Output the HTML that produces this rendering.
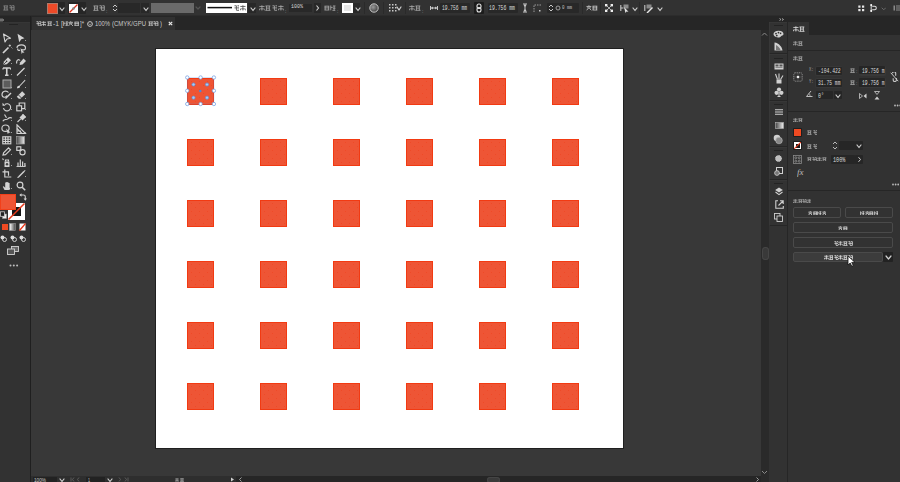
<!DOCTYPE html>
<html><head><meta charset="utf-8"><style>
*{margin:0;padding:0;box-sizing:border-box}
html,body{width:900px;height:482px;overflow:hidden;background:#323232;font-family:"Liberation Sans",sans-serif;color:#c8c8c8;position:relative}
.a{position:absolute;display:block}
.t{white-space:nowrap}
.sq{position:absolute;width:27px;height:27px;background-color:#ee5535;background-image:radial-gradient(circle at 2.5px 2.5px,#ef4a28 0.6px,transparent 1px),radial-gradient(circle at 6.5px 6.5px,#ef4a28 0.6px,transparent 1px);background-size:8px 8px;background-position:2px 1px;box-shadow:inset 0 0 0 1px #f23a12}
</style></head><body>
<div class="a" style="left:0px;top:0px;width:900px;height:16px;background:#323232;"></div>
<div class="a" style="left:0px;top:15px;width:900px;height:1px;background:#2c2c2c;"></div>
<div class="a" style="left:0px;top:16px;width:30px;height:6px;background:#262626;"></div>
<div class="a" style="left:0px;top:22px;width:30px;height:460px;background:#323232;"></div>
<div class="a" style="left:30px;top:16px;width:1px;height:466px;background:#1f1f1f;"></div>
<div class="a" style="left:31px;top:16px;width:738px;height:14px;background:#262626;"></div>
<div class="a" style="left:32px;top:16.5px;width:143px;height:13px;background:#313131;"></div>
<div class="a" style="left:31px;top:30px;width:730px;height:446px;background:#383838;"></div>
<div class="a" style="left:155px;top:48px;width:469px;height:401px;background:#1f1f1f;"></div>
<div class="a" style="left:156px;top:49px;width:467px;height:399px;background:#ffffff;"></div>
<div class="sq" style="left:187px;top:78px"></div><div class="sq" style="left:260px;top:78px"></div><div class="sq" style="left:333px;top:78px"></div><div class="sq" style="left:406px;top:78px"></div><div class="sq" style="left:479px;top:78px"></div><div class="sq" style="left:552px;top:78px"></div><div class="sq" style="left:187px;top:139px"></div><div class="sq" style="left:260px;top:139px"></div><div class="sq" style="left:333px;top:139px"></div><div class="sq" style="left:406px;top:139px"></div><div class="sq" style="left:479px;top:139px"></div><div class="sq" style="left:552px;top:139px"></div><div class="sq" style="left:187px;top:200px"></div><div class="sq" style="left:260px;top:200px"></div><div class="sq" style="left:333px;top:200px"></div><div class="sq" style="left:406px;top:200px"></div><div class="sq" style="left:479px;top:200px"></div><div class="sq" style="left:552px;top:200px"></div><div class="sq" style="left:187px;top:261px"></div><div class="sq" style="left:260px;top:261px"></div><div class="sq" style="left:333px;top:261px"></div><div class="sq" style="left:406px;top:261px"></div><div class="sq" style="left:479px;top:261px"></div><div class="sq" style="left:552px;top:261px"></div><div class="sq" style="left:187px;top:322px"></div><div class="sq" style="left:260px;top:322px"></div><div class="sq" style="left:333px;top:322px"></div><div class="sq" style="left:406px;top:322px"></div><div class="sq" style="left:479px;top:322px"></div><div class="sq" style="left:552px;top:322px"></div><div class="sq" style="left:187px;top:383px"></div><div class="sq" style="left:260px;top:383px"></div><div class="sq" style="left:333px;top:383px"></div><div class="sq" style="left:406px;top:383px"></div><div class="sq" style="left:479px;top:383px"></div><div class="sq" style="left:552px;top:383px"></div>
<div class="a" style="left:31px;top:476px;width:729px;height:6px;background:#262626;"></div>
<div class="a" style="left:760px;top:16px;width:140px;height:6px;background:#262626;"></div>
<div class="a" style="left:761px;top:30px;width:8px;height:446px;background:#2a2a2a;"></div>
<div class="a" style="left:761px;top:476px;width:8px;height:6px;background:#2a2a2a;"></div>
<div class="a" style="left:769px;top:22px;width:18px;height:460px;background:#323232;"></div>
<div class="a" style="left:787px;top:22px;width:1px;height:460px;background:#262626;"></div>
<div class="a" style="left:788px;top:22px;width:112px;height:460px;background:#323232;"></div>
<svg class="a" style="left:3.0px;top:5px;opacity:1.0" width="5.5" height="5.5" viewBox="0 0 6 6"><path d="M0.5 1h5M1.5 1v4.5M4.5 1v4.5M1.5 3.2h3M0.3 5.5h5.4" fill="none" stroke="#8a8a8a" stroke-width="0.93"/></svg><svg class="a" style="left:9.0px;top:5px;opacity:1.0" width="5.5" height="5.5" viewBox="0 0 6 6"><path d="M0.5 0.8h2v4.5M3.5 0.8h2v4.7M0.5 3h5M2.5 5.5h3" fill="none" stroke="#8a8a8a" stroke-width="0.93"/></svg>
<div class="a" style="left:47px;top:2px;width:18px;height:12px;background:#262626;border-radius:1px"></div>
<div class="a" style="left:48px;top:4px;width:9px;height:9px;background:#ee4a28;box-shadow:0 0 0 1px #b07a6a"></div>
<svg class="a" style="left:58.5px;top:6.5px;" width="6" height="5.5" viewBox="0 0 6 5.5"><polyline points="1,1 3.0,3.5 5,1" fill="none" stroke="#d0d0d0" stroke-width="1.2" stroke-linejoin="round" stroke-linecap="round"/></svg>
<div class="a" style="left:68px;top:2px;width:18px;height:12px;background:#262626;border-radius:1px"></div>
<div class="a" style="left:69px;top:4px;width:9px;height:9px;background:#ffffff;"></div>
<svg class="a" style="left:69px;top:4px;" width="9" height="9" viewBox="0 0 9 9"><line x1="0.5" y1="8.5" x2="8.5" y2="0.5" stroke="#e0321c" stroke-width="1.2"/><circle cx="4.5" cy="4.5" r="1.3" fill="#888"/></svg>
<svg class="a" style="left:80.5px;top:6.5px;" width="6" height="5.5" viewBox="0 0 6 5.5"><polyline points="1,1 3.0,3.5 5,1" fill="none" stroke="#d0d0d0" stroke-width="1.2" stroke-linejoin="round" stroke-linecap="round"/></svg>
<svg class="a" style="left:93.0px;top:5px;opacity:1.0" width="5.8" height="5.8" viewBox="0 0 6 6"><path d="M0.5 1h5M1.5 1v4.5M4.5 1v4.5M1.5 3.2h3M0.3 5.5h5.4" fill="none" stroke="#a8a8a8" stroke-width="0.88"/></svg><svg class="a" style="left:99.3px;top:5px;opacity:1.0" width="5.8" height="5.8" viewBox="0 0 6 6"><path d="M0.5 0.8h2v4.5M3.5 0.8h2v4.7M0.5 3h5M2.5 5.5h3" fill="none" stroke="#a8a8a8" stroke-width="0.88"/></svg>
<div class="a t" style="left:106px;top:8.85px;font-size:5px;line-height:5px;color:#a8a8a8;">:</div>
<svg class="a" style="left:112px;top:3px;" width="6" height="10" viewBox="0 0 6 10"><polyline points="1,4 3,2 5,4" fill="none" stroke="#c8c8c8" stroke-width="1"/><polyline points="1,6 3,8 5,6" fill="none" stroke="#c8c8c8" stroke-width="1"/></svg>
<div class="a" style="left:118px;top:3px;width:22px;height:10px;background:#282828;"></div>
<div class="a" style="left:141px;top:3px;width:8px;height:10px;background:#282828;"></div>
<svg class="a" style="left:143px;top:6.5px;" width="6" height="5.5" viewBox="0 0 6 5.5"><polyline points="1,1 3.0,3.5 5,1" fill="none" stroke="#d0d0d0" stroke-width="1.2" stroke-linejoin="round" stroke-linecap="round"/></svg>
<div class="a" style="left:151px;top:3px;width:43px;height:10px;background:#6a6a6a;"></div>
<svg class="a" style="left:195px;top:6px;" width="6" height="5" viewBox="0 0 6 5"><polyline points="1,1 3.0,3 5,1" fill="none" stroke="#555555" stroke-width="1.2" stroke-linejoin="round" stroke-linecap="round"/></svg>
<div class="a" style="left:206px;top:3px;width:41px;height:10px;background:#ffffff;"></div>
<svg class="a" style="left:206px;top:6px;" width="27" height="3" viewBox="0 0 27 3"><line x1="1.5" y1="1.6" x2="26" y2="1.6" stroke="#111" stroke-width="1.5"/></svg>
<svg class="a" style="left:233.5px;top:5px;opacity:1.0" width="5.8" height="5.8" viewBox="0 0 6 6"><path d="M0.5 0.8h2v4.5M3.5 0.8h2v4.7M0.5 3h5M2.5 5.5h3" fill="none" stroke="#505050" stroke-width="0.88"/></svg><svg class="a" style="left:239.8px;top:5px;opacity:1.0" width="5.8" height="5.8" viewBox="0 0 6 6"><path d="M0.3 1.5h5.4M3 0.3v5.4M1 3.5l-0.7 2M5 3.5l0.7 2M1.5 4h3" fill="none" stroke="#505050" stroke-width="0.88"/></svg>
<div class="a" style="left:248px;top:3px;width:8px;height:10px;background:#282828;"></div>
<svg class="a" style="left:250px;top:6.5px;" width="6" height="5.5" viewBox="0 0 6 5.5"><polyline points="1,1 3.0,3.5 5,1" fill="none" stroke="#d0d0d0" stroke-width="1.2" stroke-linejoin="round" stroke-linecap="round"/></svg>
<svg class="a" style="left:259.0px;top:5px;opacity:1.0" width="5.8" height="5.8" viewBox="0 0 6 6"><path d="M0.3 1.5h5.4M3 0.3v5.4M1 3.5l-0.7 2M5 3.5l0.7 2M1.5 4h3" fill="none" stroke="#a8a8a8" stroke-width="0.88"/></svg><svg class="a" style="left:265.3px;top:5px;opacity:1.0" width="5.8" height="5.8" viewBox="0 0 6 6"><path d="M0.5 1h5M1.5 1v4.5M4.5 1v4.5M1.5 3.2h3M0.3 5.5h5.4" fill="none" stroke="#a8a8a8" stroke-width="0.88"/></svg><svg class="a" style="left:271.6px;top:5px;opacity:1.0" width="5.8" height="5.8" viewBox="0 0 6 6"><path d="M0.5 0.8h2v4.5M3.5 0.8h2v4.7M0.5 3h5M2.5 5.5h3" fill="none" stroke="#a8a8a8" stroke-width="0.88"/></svg><svg class="a" style="left:277.9px;top:5px;opacity:1.0" width="5.8" height="5.8" viewBox="0 0 6 6"><path d="M0.3 1.5h5.4M3 0.3v5.4M1 3.5l-0.7 2M5 3.5l0.7 2M1.5 4h3" fill="none" stroke="#a8a8a8" stroke-width="0.88"/></svg>
<div class="a t" style="left:285px;top:8.85px;font-size:5px;line-height:5px;color:#a8a8a8;">:</div>
<div class="a" style="left:289px;top:4px;width:23px;height:8px;background:#282828;"></div>
<div class="a t" style="left:290.5px;top:4.02px;font-size:6px;line-height:6px;color:#dadada;transform:scaleX(0.833);transform-origin:0 0;font-family:'Liberation Mono',monospace;">100%</div>
<div class="a" style="left:314px;top:3px;width:7px;height:10px;background:#282828;"></div>
<svg class="a" style="left:315px;top:4px;" width="5" height="8" viewBox="0 0 5 8"><polyline points="1.5,1.5 3.5,4 1.5,6.5" fill="none" stroke="#d0d0d0" stroke-width="1.1"/></svg>
<svg class="a" style="left:324.0px;top:5px;opacity:1.0" width="5.8" height="5.8" viewBox="0 0 6 6"><path d="M0.5 1.2h5M0.5 3h5M0.5 5.2h5M1.2 1.2v4M4.8 1.2v4" fill="none" stroke="#a8a8a8" stroke-width="0.88"/></svg><svg class="a" style="left:330.3px;top:5px;opacity:1.0" width="5.8" height="5.8" viewBox="0 0 6 6"><path d="M0.8 0.5v5M0.8 2.5h2M3 1h2.7M4.3 1v4.5M3 3.3h2.7M2.5 5.5h3" fill="none" stroke="#a8a8a8" stroke-width="0.88"/></svg>
<div class="a t" style="left:337px;top:8.85px;font-size:5px;line-height:5px;color:#a8a8a8;">:</div>
<div class="a" style="left:342px;top:3px;width:11px;height:10px;background:#f2f2f2;box-shadow:inset 0 0 0 1px #fff;background:#e6e6e6;border:1px solid #fff"></div>
<div class="a" style="left:353px;top:3px;width:7px;height:10px;background:#282828;"></div>
<svg class="a" style="left:354.5px;top:6.5px;" width="6" height="5.5" viewBox="0 0 6 5.5"><polyline points="1,1 3.0,3.5 5,1" fill="none" stroke="#d0d0d0" stroke-width="1.2" stroke-linejoin="round" stroke-linecap="round"/></svg>
<div class="a" style="left:364px;top:2px;width:1px;height:12px;background:#2a2a2a;"></div>
<svg class="a" style="left:368.5px;top:3px;" width="10" height="10" viewBox="0 0 10 10"><defs><radialGradient id="gb" cx="40%" cy="40%" r="65%"><stop offset="0" stop-color="#9a9a9a"/><stop offset="1" stop-color="#3a3a3a"/></radialGradient></defs><circle cx="5" cy="5" r="4.2" fill="url(#gb)" stroke="#d8d8d8" stroke-width="0.9"/></svg>
<div class="a" style="left:383px;top:2px;width:1px;height:12px;background:#2a2a2a;"></div>
<svg class="a" style="left:388px;top:3px;" width="9" height="10" viewBox="0 0 9 10"><rect x="1" y="1" width="1.5" height="1.5" fill="#c8c8c8"/><rect x="1" y="4" width="1.5" height="1.5" fill="#c8c8c8"/><rect x="1" y="7" width="1.5" height="1.5" fill="#c8c8c8"/><rect x="4" y="1" width="1.5" height="1.5" fill="#c8c8c8"/><rect x="4" y="4" width="1.5" height="1.5" fill="#c8c8c8"/><rect x="4" y="7" width="1.5" height="1.5" fill="#c8c8c8"/><rect x="7" y="1" width="1.5" height="1.5" fill="#c8c8c8"/><rect x="7" y="4" width="1.5" height="1.5" fill="#c8c8c8"/><rect x="7" y="7" width="1.5" height="1.5" fill="#c8c8c8"/></svg>
<svg class="a" style="left:396px;top:6px;" width="6" height="6" viewBox="0 0 6 6"><polyline points="1,1 3.0,4 5,1" fill="none" stroke="#d0d0d0" stroke-width="1.2" stroke-linejoin="round" stroke-linecap="round"/></svg>
<div class="a" style="left:405px;top:2px;width:1px;height:12px;background:#2a2a2a;"></div>
<svg class="a" style="left:409.0px;top:5px;opacity:1.0" width="5.8" height="5.8" viewBox="0 0 6 6"><path d="M0.3 1.5h5.4M3 0.3v5.4M1 3.5l-0.7 2M5 3.5l0.7 2M1.5 4h3" fill="none" stroke="#a8a8a8" stroke-width="0.88"/></svg><svg class="a" style="left:415.3px;top:5px;opacity:1.0" width="5.8" height="5.8" viewBox="0 0 6 6"><path d="M0.5 1h5M1.5 1v4.5M4.5 1v4.5M1.5 3.2h3M0.3 5.5h5.4" fill="none" stroke="#a8a8a8" stroke-width="0.88"/></svg>
<div class="a t" style="left:422px;top:8.85px;font-size:5px;line-height:5px;color:#a8a8a8;">:</div>
<svg class="a" style="left:430px;top:5px;" width="8" height="6" viewBox="0 0 8 6"><path d="M0.5 1v4M7.5 1v4M1 3h6" stroke="#c8c8c8" stroke-width="1"/><path d="M1 3l2-1.5v3zM7 3l-2-1.5v3z" fill="#c8c8c8"/></svg>
<div class="a" style="left:440px;top:3px;width:30px;height:10px;background:#282828;border-radius:1px"></div>
<div class="a t" style="left:441.8px;top:5.64px;font-size:6.6px;line-height:6.6px;color:#dadada;transform:scaleX(0.701);transform-origin:0 0;font-family:'Liberation Mono',monospace;">19.756 mm</div>
<div class="a" style="left:474px;top:2px;width:10px;height:12px;background:#1c1c1c;border-radius:1px"></div>
<svg class="a" style="left:475px;top:3px;" width="8" height="10" viewBox="0 0 8 10"><rect x="2" y="1" width="4" height="4.5" rx="2" fill="none" stroke="#e0e0e0" stroke-width="1.1"/><rect x="2" y="4.5" width="4" height="4.5" rx="2" fill="none" stroke="#e0e0e0" stroke-width="1.1"/></svg>
<div class="a" style="left:488px;top:3px;width:30px;height:10px;background:#282828;border-radius:1px"></div>
<div class="a t" style="left:489px;top:5.64px;font-size:6.6px;line-height:6.6px;color:#dadada;transform:scaleX(0.729);transform-origin:0 0;font-family:'Liberation Mono',monospace;">19.756 mm</div>
<svg class="a" style="left:522px;top:3px;" width="6" height="10" viewBox="0 0 6 10"><path d="M1 1h4M1 9h4M3 1v8" stroke="#c8c8c8" stroke-width="1"/><path d="M1.5 2l1.5 2 1.5-2zM1.5 8l1.5-2 1.5 2z" fill="#c8c8c8"/></svg>
<svg class="a" style="left:533px;top:4px;" width="9" height="9" viewBox="0 0 9 9"><path d="M1 8V1h7" fill="none" stroke="#9a9a9a" stroke-width="1" stroke-dasharray="1.5 1"/><rect x="6" y="6" width="1.5" height="1.5" fill="#c8c8c8"/></svg>
<div class="a" style="left:547px;top:3px;width:32px;height:10px;background:#282828;border-radius:1px"></div>
<svg class="a" style="left:548px;top:3px;" width="6" height="10" viewBox="0 0 6 10"><polyline points="1,4 3,2 5,4" fill="none" stroke="#c8c8c8" stroke-width="1"/><polyline points="1,6 3,8 5,6" fill="none" stroke="#c8c8c8" stroke-width="1"/></svg>
<svg class="a" style="left:555px;top:5px;" width="6" height="6" viewBox="0 0 6 6"><circle cx="3" cy="3" r="2" fill="none" stroke="#aaa" stroke-width="0.9"/></svg>
<div class="a t" style="left:562px;top:5.02px;font-size:6px;line-height:6px;color:#c8c8c8;transform:scaleX(0.694);transform-origin:0 0;font-family:'Liberation Mono',monospace;">0 mm</div>
<div class="a" style="left:582px;top:2px;width:1px;height:12px;background:#2a2a2a;"></div>
<svg class="a" style="left:586.0px;top:5px;opacity:1.0" width="5.8" height="5.8" viewBox="0 0 6 6"><path d="M3 0.3v1M0.5 1.5h5M1 3h4M0.5 5.5l2-2M5.5 5.5l-2-2" fill="none" stroke="#c8c8c8" stroke-width="0.88"/></svg><svg class="a" style="left:592.2px;top:5px;opacity:1.0" width="5.8" height="5.8" viewBox="0 0 6 6"><path d="M0.5 1.2h5M0.5 3h5M0.5 5.2h5M1.2 1.2v4M4.8 1.2v4" fill="none" stroke="#c8c8c8" stroke-width="0.88"/></svg>
<div class="a" style="left:600px;top:2px;width:1px;height:12px;background:#2a2a2a;"></div>
<svg class="a" style="left:605px;top:4px;" width="8" height="8" viewBox="0 0 8 8"><path d="M1.5 1.5l5 5M6.5 1.5l-5 5" stroke="#bbb" stroke-width="0.9"/><rect x="0" y="0" width="2.4" height="2.4" fill="#eee"/><rect x="5.6" y="0" width="2.4" height="2.4" fill="#eee"/><rect x="0" y="5.6" width="2.4" height="2.4" fill="#eee"/><rect x="5.6" y="5.6" width="2.4" height="2.4" fill="#eee"/></svg>
<svg class="a" style="left:620px;top:3px;" width="9" height="10" viewBox="0 0 9 10"><path d="M0.8 2v6M0.8 5h2.5" stroke="#c8c8c8" stroke-width="1.1"/><path d="M3.5 1.5h5v4h-5z" fill="#8a8a8a"/><path d="M4 4l4.5 4.8-2 -.3-1 1.5z" fill="#e6e6e6"/></svg>
<svg class="a" style="left:631.5px;top:6.5px;" width="6" height="5.5" viewBox="0 0 6 5.5"><polyline points="1,1 3.0,3.5 5,1" fill="none" stroke="#d0d0d0" stroke-width="1.2" stroke-linejoin="round" stroke-linecap="round"/></svg>
<div class="a" style="left:639px;top:2px;width:1px;height:12px;background:#2a2a2a;"></div>
<svg class="a" style="left:644px;top:3px;" width="9" height="10" viewBox="0 0 9 10"><path d="M0.8 2v6" stroke="#c8c8c8" stroke-width="1.1"/><path d="M2.5 1.5h5v4h-5z" fill="#8a8a8a"/><path d="M2.5 9.5l5.5-5.5 1 1-5.5 5.5z" fill="#e6e6e6"/></svg>
<svg class="a" style="left:657px;top:6.5px;" width="6" height="5.5" viewBox="0 0 6 5.5"><polyline points="1,1 3.0,3.5 5,1" fill="none" stroke="#d0d0d0" stroke-width="1.2" stroke-linejoin="round" stroke-linecap="round"/></svg>
<svg class="a" style="left:858px;top:4.5px;" width="7" height="7" viewBox="0 0 7 7"><rect x="0.3" y="0.5" width="2.2" height="2.2" fill="#e8e8e8"/><rect x="4" y="0.5" width="2.2" height="2.2" fill="#e8e8e8"/><rect x="0.3" y="4" width="2.2" height="2.2" fill="#e8e8e8"/><rect x="4" y="4" width="2.2" height="2.2" fill="#e8e8e8"/></svg>
<svg class="a" style="left:869px;top:4px;" width="10" height="8" viewBox="0 0 10 8"><path d="M2.2 0.8v6.4" stroke="#e0e0e0" stroke-width="1"/><circle cx="2.2" cy="1" r="1" fill="#fff"/><circle cx="2.2" cy="7" r="1" fill="#fff"/><path d="M3.2 2.2h2.3a1.8 1.8 0 0 1 0 3.6H3.2" fill="none" stroke="#e0e0e0" stroke-width="1.1"/></svg>
<svg class="a" style="left:880.8px;top:7px;" width="5.5" height="4.8" viewBox="0 0 5.5 4.8"><polyline points="1,1 2.75,2.8 4.5,1" fill="none" stroke="#6a6a6a" stroke-width="1" stroke-linejoin="round" stroke-linecap="round"/></svg>
<svg class="a" style="left:893px;top:5px;" width="7" height="6" viewBox="0 0 7 6"><rect x="0.5" y="0.5" width="1.5" height="5" fill="#8a8a8a"/><path d="M3 1h4M3 3h4M3 5h4" stroke="#8a8a8a" stroke-width="1"/></svg>
<svg class="a" style="left:35.7px;top:20.7px;opacity:1.0" width="5.3" height="5.3" viewBox="0 0 6 6"><path d="M0.5 0.8h2v4.5M3.5 0.8h2v4.7M0.5 3h5M2.5 5.5h3" fill="none" stroke="#c8c8c8" stroke-width="0.96"/></svg><svg class="a" style="left:41.2px;top:20.7px;opacity:1.0" width="5.3" height="5.3" viewBox="0 0 6 6"><path d="M0.3 1.5h5.4M3 0.3v5.4M1 3.5l-0.7 2M5 3.5l0.7 2M1.5 4h3" fill="none" stroke="#c8c8c8" stroke-width="0.96"/></svg><svg class="a" style="left:46.7px;top:20.7px;opacity:1.0" width="5.3" height="5.3" viewBox="0 0 6 6"><path d="M0.5 1h5M1.5 1v4.5M4.5 1v4.5M1.5 3.2h3M0.3 5.5h5.4" fill="none" stroke="#c8c8c8" stroke-width="0.96"/></svg>
<div class="a t" style="left:52.5px;top:19.74px;font-size:7.4px;line-height:7.4px;color:#c8c8c8;transform:scaleX(0.912);transform-origin:0 0;">-1</div>
<div class="a t" style="left:60.5px;top:19.54px;font-size:7.4px;line-height:7.4px;color:#c8c8c8;transform:scaleX(0.973);transform-origin:0 0;">[</div>
<svg class="a" style="left:62.7px;top:20.7px;opacity:1.0" width="5.4" height="5.4" viewBox="0 0 6 6"><path d="M0.8 0.5v5M0.8 2.5h2M3 1h2.7M4.3 1v4.5M3 3.3h2.7M2.5 5.5h3" fill="none" stroke="#c8c8c8" stroke-width="0.94"/></svg><svg class="a" style="left:68.4px;top:20.7px;opacity:1.0" width="5.4" height="5.4" viewBox="0 0 6 6"><path d="M3 0.3v1M0.5 1.5h5M1 3h4M0.5 5.5l2-2M5.5 5.5l-2-2" fill="none" stroke="#c8c8c8" stroke-width="0.94"/></svg><svg class="a" style="left:74.10000000000001px;top:20.7px;opacity:1.0" width="5.4" height="5.4" viewBox="0 0 6 6"><path d="M0.5 1.2h5M0.5 3h5M0.5 5.2h5M1.2 1.2v4M4.8 1.2v4" fill="none" stroke="#c8c8c8" stroke-width="0.94"/></svg>
<div class="a t" style="left:80px;top:19.74px;font-size:7.4px;line-height:7.4px;color:#c8c8c8;transform:scaleX(0.810);transform-origin:0 0;">]*</div>
<svg class="a" style="left:87px;top:20.5px;" width="6" height="6" viewBox="0 0 6 6"><circle cx="3" cy="3" r="2.4" fill="none" stroke="#c4c4c4" stroke-width="1"/><path d="M1.8 2.6l1.2 1.2 1.2-1.2" fill="none" stroke="#c4c4c4" stroke-width="0.8"/></svg>
<div class="a t" style="left:95px;top:19.74px;font-size:7.4px;line-height:7.4px;color:#c8c8c8;transform:scaleX(0.793);transform-origin:0 0;">100%</div>
<div class="a t" style="left:112px;top:19.74px;font-size:7.4px;line-height:7.4px;color:#c8c8c8;transform:scaleX(0.811);transform-origin:0 0;">(CMYK/GPU</div>
<svg class="a" style="left:147.5px;top:20.7px;opacity:1.0" width="5.4" height="5.4" viewBox="0 0 6 6"><path d="M0.5 1h5M1.5 1v4.5M4.5 1v4.5M1.5 3.2h3M0.3 5.5h5.4" fill="none" stroke="#c8c8c8" stroke-width="0.94"/></svg><svg class="a" style="left:153.4px;top:20.7px;opacity:1.0" width="5.4" height="5.4" viewBox="0 0 6 6"><path d="M0.5 0.8h2v4.5M3.5 0.8h2v4.7M0.5 3h5M2.5 5.5h3" fill="none" stroke="#c8c8c8" stroke-width="0.94"/></svg>
<div class="a t" style="left:159.5px;top:19.74px;font-size:7.4px;line-height:7.4px;color:#c8c8c8;transform:scaleX(0.812);transform-origin:0 0;">)</div>
<svg class="a" style="left:168px;top:20.5px;" width="5" height="5" viewBox="0 0 5 5"><path d="M0.8 0.8l3.4 3.4M4.2 0.8L0.8 4.2" stroke="#e8e8e8" stroke-width="1.2"/></svg>
<svg class="a" style="left:0px;top:17.5px;" width="4" height="4" viewBox="0 0 4 4"><path d="M0 0.5l1.5 1.5L0 3.5M2 0.5l1.5 1.5L2 3.5" fill="none" stroke="#c8c8c8" stroke-width="0.9"/></svg>
<div class="a" style="left:9px;top:24px;width:9px;height:1px;background:#232323;"></div>
<div class="a" style="left:0px;top:22px;width:30px;height:1px;background:#393939;opacity:0.6"></div>
<svg class="a" style="left:1.5px;top:32.5px;" width="11" height="10" viewBox="0 0 11 10"><path d="M1.5 1L8.5 5.2 5 6 3 9z" fill="none" stroke="#d2d2d2" stroke-width="1.15" stroke-linejoin="round"/></svg>
<svg class="a" style="left:16px;top:32.5px;" width="11" height="10" viewBox="0 0 11 10"><path d="M1.5 0.8L8.5 5.3 5.3 6.2 3.2 9.3z" fill="#d2d2d2"/></svg>
<div class="a" style="left:25px;top:40px;width:1px;height:1px;background:#a0a0a0;"></div>
<svg class="a" style="left:1.5px;top:43.5px;" width="11" height="10" viewBox="0 0 11 10"><path d="M1 9L6.5 3.5" stroke="#d2d2d2" stroke-width="1.7"/><path d="M7.8 0.5v2.2M6.7 1.6h2.2M9.5 3.5l.8.8" stroke="#d2d2d2" stroke-width="0.9"/></svg>
<svg class="a" style="left:16px;top:43.5px;" width="11" height="10" viewBox="0 0 11 10"><path d="M1 4C1 1.5 4 0.8 5.5 0.8S9.5 1.5 9.5 4 7 6 5 5.5" fill="none" stroke="#d2d2d2" stroke-width="1.15"/><path d="M2 4.5C1 6 3 7 4 6" fill="none" stroke="#d2d2d2" stroke-width="1.15" stroke-width="0.8"/><path d="M4.5 4l4 4.8-2 -.2-.8 1.5z" fill="#d2d2d2"/></svg>
<svg class="a" style="left:1.5px;top:55.5px;" width="11" height="10" viewBox="0 0 11 10"><path d="M1.2 8.8L2 5.5 6 1.2 9 4.2 4.8 8.2z" fill="#d2d2d2"/><path d="M1.2 8.8l2.8-2.8" stroke="#323232" stroke-width="0.8"/><circle cx="4.6" cy="5.4" r="0.8" fill="#323232"/></svg>
<div class="a" style="left:11px;top:63px;width:1px;height:1px;background:#a0a0a0;"></div>
<svg class="a" style="left:16px;top:55.5px;" width="11" height="10" viewBox="0 0 11 10"><path d="M3.5 9L4.2 6.2 7.5 2.5 10 5 6.5 8.5z" fill="#d2d2d2"/><path d="M0.8 7.5C0 4.5 2.5 2.5 4 4.5" fill="none" stroke="#d2d2d2" stroke-width="1.15" stroke-width="0.9"/></svg>
<svg class="a" style="left:1.5px;top:67px;" width="11" height="10" viewBox="0 0 11 10"><path d="M1 1h7.5M4.75 1v7.2M3 8.2h3.5" stroke="#d2d2d2" stroke-width="1.6"/><path d="M1 1v1.6M8.5 1v1.6" stroke="#d2d2d2" stroke-width="1"/></svg>
<div class="a" style="left:11px;top:74px;width:1px;height:1px;background:#a0a0a0;"></div>
<svg class="a" style="left:16px;top:67px;" width="11" height="10" viewBox="0 0 11 10"><path d="M1 8.5L8.5 1" stroke="#d2d2d2" stroke-width="1.2"/></svg>
<div class="a" style="left:25px;top:75px;width:1px;height:1px;background:#a0a0a0;"></div>
<svg class="a" style="left:1.5px;top:78.5px;" width="11" height="10" viewBox="0 0 11 10"><rect x="1" y="1" width="8" height="8" fill="#5c5c5c" stroke="#aaaaaa" stroke-width="1"/></svg>
<div class="a" style="left:11px;top:87px;width:1px;height:1px;background:#a0a0a0;"></div>
<svg class="a" style="left:16px;top:78.5px;" width="11" height="10" viewBox="0 0 11 10"><path d="M1 9.2c0-1.8.8-2.8 2.3-2.5L8.8 0.8 9.5 1.5 4 7.3c.2 1.5-1 2.2-3 1.9z" fill="#d2d2d2"/></svg>
<div class="a" style="left:25px;top:87px;width:1px;height:1px;background:#a0a0a0;"></div>
<svg class="a" style="left:1px;top:90px;" width="11" height="10" viewBox="0 0 11 10"><path d="M7.5 2.5C5.5 0 1 1 1 4.5S5 8 6 5.5" fill="none" stroke="#d2d2d2" stroke-width="1.15"/><path d="M4.5 8.5L10 3" stroke="#d2d2d2" stroke-width="1.5"/></svg>
<div class="a" style="left:11px;top:98px;width:1px;height:1px;background:#a0a0a0;"></div>
<svg class="a" style="left:16px;top:90px;" width="11" height="10" viewBox="0 0 11 10"><path d="M2.8 8.8L0.8 6.8 6.2 1.2 9.2 4.2 4.5 8.8z" fill="#d2d2d2"/><path d="M2.5 5l3 3" stroke="#323232" stroke-width="0.9"/></svg>
<div class="a" style="left:25px;top:98px;width:1px;height:1px;background:#a0a0a0;"></div>
<svg class="a" style="left:1.5px;top:101.5px;" width="11" height="10" viewBox="0 0 11 10"><path d="M2.8 2.5A3.6 3.6 0 1 1 1.5 6" fill="none" stroke="#d2d2d2" stroke-width="1.15" stroke-width="1.3"/><path d="M0.5 0.8v3h3z" fill="#d2d2d2"/></svg>
<div class="a" style="left:11px;top:109px;width:1px;height:1px;background:#a0a0a0;"></div>
<svg class="a" style="left:16px;top:101.5px;" width="11" height="10" viewBox="0 0 11 10"><rect x="0.8" y="3.8" width="4.8" height="5" fill="none" stroke="#d2d2d2" stroke-width="1.15"/><path d="M3.2 3.8V1h5.6v5.6H5.6" fill="none" stroke="#d2d2d2" stroke-width="1.15"/></svg>
<div class="a" style="left:25px;top:109px;width:1px;height:1px;background:#a0a0a0;"></div>
<svg class="a" style="left:1.5px;top:112.5px;" width="11" height="10" viewBox="0 0 11 10"><path d="M0.8 8.3C2.5 5 4 7.5 5.8 5.8S8.5 4.5 10 5" fill="none" stroke="#d2d2d2" stroke-width="1.15" stroke-width="1.4"/><path d="M2.5 1.5l2 3.2" fill="none" stroke="#d2d2d2" stroke-width="1.15"/></svg>
<div class="a" style="left:11px;top:120px;width:1px;height:1px;background:#a0a0a0;"></div>
<svg class="a" style="left:16px;top:112.5px;" width="11" height="10" viewBox="0 0 11 10"><path d="M1.5 9l3.2-3.2" stroke="#d2d2d2" stroke-width="1.1"/><path d="M3.5 4.5L7 1l3 3-3.5 3.5z" fill="#d2d2d2"/><path d="M6.5 1.5l3 3" stroke="#d2d2d2" stroke-width="1.6"/></svg>
<div class="a" style="left:25px;top:120px;width:1px;height:1px;background:#a0a0a0;"></div>
<svg class="a" style="left:1px;top:123.5px;" width="11" height="10" viewBox="0 0 11 10"><ellipse cx="4.5" cy="4.2" rx="3.6" ry="3.2" fill="none" stroke="#d2d2d2" stroke-width="1.15"/><path d="M5 4.5l4.5 4-1.8.2-.8 1.5z" fill="#d2d2d2"/></svg>
<div class="a" style="left:11px;top:132px;width:1px;height:1px;background:#a0a0a0;"></div>
<svg class="a" style="left:15.5px;top:123.5px;" width="11" height="10" viewBox="0 0 11 10"><path d="M1 9.5V0.8L9.5 9.5z" fill="none" stroke="#d2d2d2" stroke-width="1.15"/><path d="M1 4.5l5 5M1 7h4" fill="none" stroke="#d2d2d2" stroke-width="1.15" stroke-width="0.7"/></svg>
<div class="a" style="left:25px;top:132px;width:1px;height:1px;background:#a0a0a0;"></div>
<svg class="a" style="left:2px;top:135.5px;" width="11" height="10" viewBox="0 0 11 10"><rect x="0.8" y="0.8" width="8" height="7" fill="none" stroke="#d2d2d2" stroke-width="1.15" stroke-width="1"/><path d="M0.8 3.2h8M0.8 5.5h8M3.5 0.8v7M6 0.8v7" fill="none" stroke="#d2d2d2" stroke-width="1.15" stroke-width="0.8"/></svg>
<svg class="a" style="left:16px;top:135.5px;" width="11" height="10" viewBox="0 0 11 10"><defs><linearGradient id="tg"><stop offset="0" stop-color="#444"/><stop offset="1" stop-color="#e8e8e8"/></linearGradient></defs><rect x="0.5" y="0.5" width="8" height="7.5" fill="url(#tg)" stroke="#999" stroke-width="0.7"/></svg>
<svg class="a" style="left:1.5px;top:146px;" width="11" height="10" viewBox="0 0 11 10"><path d="M1 9l.6-2.2L6.5 1.8 8.5 3.8 3.5 8.6z" fill="none" stroke="#d2d2d2" stroke-width="1.15" stroke-width="1.2"/></svg>
<div class="a" style="left:11px;top:154px;width:1px;height:1px;background:#a0a0a0;"></div>
<svg class="a" style="left:16px;top:146px;" width="11" height="10" viewBox="0 0 11 10"><rect x="0.8" y="0.8" width="4" height="3.6" fill="none" stroke="#d2d2d2" stroke-width="1.15"/><circle cx="6.5" cy="6.2" r="2.6" fill="none" stroke="#d2d2d2" stroke-width="1.15" stroke-width="1.2"/><path d="M3.8 3.5l1.5 1.4" fill="none" stroke="#d2d2d2" stroke-width="1.15"/></svg>
<svg class="a" style="left:1.5px;top:157.8px;" width="11" height="10" viewBox="0 0 11 10"><path d="M2.5 3.5h5v5.5h-5z" fill="#d2d2d2"/><path d="M3.5 3.5V2h3v1.5" fill="none" stroke="#d2d2d2" stroke-width="1.15" stroke-width="0.8"/><path d="M0.5 0.5l1 1.5" fill="none" stroke="#d2d2d2" stroke-width="1.15" stroke-width="0.9"/><circle cx="5" cy="6.3" r="1.2" fill="#444"/></svg>
<div class="a" style="left:11px;top:165px;width:1px;height:1px;background:#a0a0a0;"></div>
<svg class="a" style="left:16px;top:157.8px;" width="11" height="10" viewBox="0 0 11 10"><path d="M0.5 8.5h9" stroke="#d2d2d2" stroke-width="0.9"/><path d="M2 8.5V4.5M4.3 8.5V1.5M6.6 8.5V3.5M8.9 8.5V5" stroke="#d2d2d2" stroke-width="1.2"/></svg>
<div class="a" style="left:25px;top:165px;width:1px;height:1px;background:#a0a0a0;"></div>
<svg class="a" style="left:1.5px;top:169px;" width="11" height="10" viewBox="0 0 11 10"><path d="M2.8 0.5v7.5h6.5M0.5 2.8h6v4" fill="none" stroke="#d2d2d2" stroke-width="1.15" stroke-width="1.2"/></svg>
<svg class="a" style="left:16px;top:169px;" width="11" height="10" viewBox="0 0 11 10"><path d="M1 8.5L7 2.5 9 1l.5.5L8 3.5 2.5 9z" fill="#d2d2d2"/><path d="M2 7.5l1 1" stroke="#323232" stroke-width="0.6"/></svg>
<div class="a" style="left:25px;top:176px;width:1px;height:1px;background:#a0a0a0;"></div>
<svg class="a" style="left:1.5px;top:181px;" width="11" height="10" viewBox="0 0 11 10"><path d="M2.5 9L0.8 5.8l.9-.6 1.5 1.5V1.5h1.1V5V1h1.1V5 1.3h1.1V5 2h1.1v4.5C8.7 8 8 9 6.5 9z" fill="#d2d2d2"/></svg>
<div class="a" style="left:11px;top:188px;width:1px;height:1px;background:#a0a0a0;"></div>
<svg class="a" style="left:16px;top:181px;" width="11" height="10" viewBox="0 0 11 10"><circle cx="4" cy="4" r="2.9" fill="none" stroke="#d2d2d2" stroke-width="1.15" stroke-width="1.2"/><path d="M6.2 6.2l3 3" stroke="#d2d2d2" stroke-width="1.6"/></svg>
<div class="a" style="left:8px;top:203px;width:17px;height:17px;background:#ffffff;"></div>
<div class="a" style="left:12px;top:207px;width:9px;height:9px;background:#151515;"></div>
<svg class="a" style="left:8px;top:203px;" width="17" height="17" viewBox="0 0 17 17"><line x1="0.5" y1="16.5" x2="16.5" y2="0.5" stroke="#e8391a" stroke-width="1.5"/></svg>
<div class="a" style="left:0px;top:194px;width:16px;height:16px;background:#ee5535;box-shadow:inset 0 0 0 1px #f2401a"></div>
<svg class="a" style="left:19px;top:193px;" width="8" height="8" viewBox="0 0 8 8"><path d="M1.5 2h3a1.8 1.8 0 0 1 1.8 1.8V6.5" fill="none" stroke="#d2d2d2" stroke-width="1.1"/><path d="M0.3 2l2.2-1.7v3.4zM6.3 7.8l-1.7-2.2h3.4z" fill="#d2d2d2"/></svg>
<svg class="a" style="left:0px;top:211px;" width="7" height="8" viewBox="0 0 7 8"><rect x="2.5" y="3" width="4" height="4.5" fill="#eee" stroke="#999" stroke-width="0.6"/><rect x="0.5" y="0.8" width="4" height="4.5" fill="#222" stroke="#ccc" stroke-width="0.8"/></svg>
<div class="a" style="left:2px;top:224px;width:6px;height:6px;background:#ef4a22;"></div>
<svg class="a" style="left:9px;top:223px;" width="7" height="8" viewBox="0 0 7 8"><defs><linearGradient id="tg2"><stop offset="0" stop-color="#fff"/><stop offset="1" stop-color="#444"/></linearGradient></defs><rect x="0.5" y="0.5" width="6" height="7" fill="url(#tg2)" stroke="#999" stroke-width="0.6"/></svg>
<svg class="a" style="left:19px;top:223px;" width="7" height="8" viewBox="0 0 7 8"><rect x="0.5" y="0.5" width="6" height="7" fill="#fff"/><line x1="0.5" y1="7.5" x2="6.5" y2="0.5" stroke="#e8391a" stroke-width="1.3"/></svg>
<svg class="a" style="left:0px;top:235px;" width="7" height="7" viewBox="0 0 7 7"><circle cx="2.5" cy="2.5" r="2" fill="#ddd"/><circle cx="4.5" cy="4.5" r="2" fill="none" stroke="#ddd" stroke-width="0.9"/></svg>
<svg class="a" style="left:10px;top:235px;" width="7" height="7" viewBox="0 0 7 7"><circle cx="2.5" cy="2.5" r="2" fill="#ddd"/><circle cx="4.5" cy="4.5" r="2" fill="none" stroke="#ddd" stroke-width="0.9"/></svg>
<svg class="a" style="left:19px;top:235px;" width="7" height="7" viewBox="0 0 7 7"><circle cx="2.5" cy="2.5" r="2" fill="#ddd"/><circle cx="4.5" cy="4.5" r="2" fill="none" stroke="#ddd" stroke-width="0.9"/></svg>
<svg class="a" style="left:7px;top:246px;" width="12" height="9" viewBox="0 0 12 9"><rect x="4.5" y="0.5" width="7" height="5" fill="#666" stroke="#d2d2d2" stroke-width="0.9"/><rect x="0.5" y="3" width="7" height="5.5" fill="#555" stroke="#d2d2d2" stroke-width="0.9"/></svg>
<svg class="a" style="left:9px;top:264px;" width="10" height="3" viewBox="0 0 10 3"><circle cx="1.5" cy="1.5" r="1" fill="#bdbdbd"/><circle cx="4.8" cy="1.5" r="1" fill="#bdbdbd"/><circle cx="8.1" cy="1.5" r="1" fill="#bdbdbd"/></svg>
<svg class="a" style="left:779px;top:18px;" width="6" height="3" viewBox="0 0 6 3"><path d="M0.5 0.5l1.5 1 -1.5 1M3 0.5l1.5 1-1.5 1" fill="none" stroke="#bbb" stroke-width="0.8"/></svg>
<svg class="a" style="left:761px;top:32px;" width="7" height="5" viewBox="0 0 7 5"><polyline points="1,3.5 3.5,1 6,3.5" fill="none" stroke="#8a8a8a" stroke-width="1"/></svg>
<svg class="a" style="left:761px;top:470px;" width="7" height="5" viewBox="0 0 7 5"><polyline points="1,1 3.5,3.5 6,1" fill="none" stroke="#8a8a8a" stroke-width="1"/></svg>
<div class="a" style="left:761.5px;top:247px;width:7px;height:13px;background:#393939;border-radius:3.5px;box-shadow:inset 0 0 0 1px #464646"></div>
<div class="a" style="left:769px;top:53px;width:18px;height:1px;background:#262626;"></div>
<div class="a" style="left:769px;top:100px;width:18px;height:1px;background:#262626;"></div>
<div class="a" style="left:769px;top:146px;width:18px;height:1px;background:#262626;"></div>
<div class="a" style="left:769px;top:179px;width:18px;height:1px;background:#262626;"></div>
<div class="a" style="left:769px;top:225px;width:18px;height:1px;background:#262626;"></div>
<div class="a" style="left:774px;top:25px;width:9px;height:1px;background:#232323;"></div>
<div class="a" style="left:774px;top:58px;width:9px;height:1px;background:#232323;"></div>
<div class="a" style="left:774px;top:104px;width:9px;height:1px;background:#232323;"></div>
<div class="a" style="left:774px;top:150px;width:9px;height:1px;background:#232323;"></div>
<div class="a" style="left:774px;top:183px;width:9px;height:1px;background:#232323;"></div>
<div class="a" style="left:769px;top:22px;width:18px;height:1px;background:#3a3a3a;opacity:0.6"></div>
<div class="a" style="left:769px;top:54px;width:18px;height:1px;background:#3a3a3a;opacity:0.6"></div>
<div class="a" style="left:769px;top:101px;width:18px;height:1px;background:#3a3a3a;opacity:0.6"></div>
<div class="a" style="left:769px;top:147px;width:18px;height:1px;background:#3a3a3a;opacity:0.6"></div>
<div class="a" style="left:769px;top:180px;width:18px;height:1px;background:#3a3a3a;opacity:0.6"></div>
<div class="a" style="left:769px;top:22px;width:1px;height:204px;background:#3a3a3a;opacity:0.6"></div>
<svg class="a" style="left:773px;top:30px;" width="11" height="8" viewBox="0 0 11 8"><path d="M5.5 0.8C9 0.8 10.7 2.5 10.5 4.2 10.3 5.8 8.5 5.2 8 6.2 7.6 7.2 6.5 7.4 5 7.4 2 7.4 0.5 5.8 0.5 4 0.5 2.2 2.5 0.8 5.5 0.8z" fill="#d0d0d0"/><circle cx="3" cy="3.6" r="0.9" fill="#323232"/><circle cx="5.5" cy="2.6" r="0.9" fill="#323232"/><circle cx="3.8" cy="5.6" r="0.9" fill="#323232"/><circle cx="7.6" cy="3.4" r="0.8" fill="#323232"/></svg>
<svg class="a" style="left:774px;top:42px;" width="9" height="9" viewBox="0 0 9 9"><path d="M0.5 8.5V0.5C5 1 8 5 8.5 8.5z" fill="#d0d0d0"/><path d="M2 8V3C4 4 6 6 6.5 8z" fill="#777"/></svg>
<svg class="a" style="left:774px;top:63px;" width="10" height="7" viewBox="0 0 10 7"><rect x="0.5" y="0.5" width="9" height="6" fill="#d0d0d0"/><path d="M1.5 1.5h3v2h-3zM5.5 1.5h3v2h-3z" fill="#555"/><path d="M1.5 4.5h7" stroke="#777" stroke-width="0.8"/></svg>
<svg class="a" style="left:774px;top:73px;" width="10" height="11" viewBox="0 0 10 11"><path d="M2.5 10.5V6.5h5v4z" fill="#d0d0d0"/><path d="M3.5 6.5L1.5 1M5 6.5V0.5M6.5 6.5l2.5-4" stroke="#d0d0d0" stroke-width="1.1"/></svg>
<svg class="a" style="left:773.5px;top:86.5px;" width="10" height="10" viewBox="0 0 10 10"><circle cx="5" cy="2.6" r="2.1" fill="#d0d0d0"/><circle cx="2.6" cy="5.8" r="2.1" fill="#d0d0d0"/><circle cx="7.4" cy="5.8" r="2.1" fill="#d0d0d0"/><path d="M5 5v4.5M3.5 9.5h3" stroke="#d0d0d0" stroke-width="1.1"/></svg>
<svg class="a" style="left:774.5px;top:108.5px;" width="8" height="6" viewBox="0 0 8 6"><path d="M0 0.8h8M0 3h8M0 5.3h8" stroke="#d0d0d0" stroke-width="1.1"/></svg>
<svg class="a" style="left:774.5px;top:121.5px;" width="9" height="7" viewBox="0 0 9 7"><defs><linearGradient id="sg"><stop offset="0" stop-color="#444"/><stop offset="1" stop-color="#f0f0f0"/></linearGradient></defs><rect x="0.5" y="0.5" width="8" height="6" fill="url(#sg)" stroke="#aaa" stroke-width="0.7"/></svg>
<svg class="a" style="left:773px;top:134px;" width="10" height="11" viewBox="0 0 10 11"><circle cx="4" cy="4" r="3.3" fill="#d0d0d0"/><circle cx="6" cy="6.5" r="3.3" fill="#888" stroke="#bbb" stroke-width="0.6"/></svg>
<svg class="a" style="left:775px;top:154.5px;" width="7" height="7" viewBox="0 0 7 7"><circle cx="3.5" cy="3.5" r="3" fill="#bdbdbd" stroke="#eee" stroke-width="0.7" stroke-dasharray="1 0.6"/></svg>
<svg class="a" style="left:774px;top:167px;" width="9" height="9" viewBox="0 0 9 9"><rect x="2.5" y="0.5" width="6" height="6" fill="none" stroke="#d0d0d0" stroke-width="1"/><circle cx="3" cy="6" r="2.4" fill="#777" stroke="#d0d0d0" stroke-width="0.8"/></svg>
<svg class="a" style="left:774.5px;top:186.5px;" width="8" height="9" viewBox="0 0 8 9"><path d="M4 0.5L7.8 3 4 5.5 0.2 3z" fill="#d0d0d0"/><path d="M0.5 5l3.5 2.6L7.5 5" fill="none" stroke="#d0d0d0" stroke-width="1.1"/></svg>
<svg class="a" style="left:774.5px;top:199.5px;" width="9" height="9" viewBox="0 0 9 9"><path d="M3 0.8H0.8v7.5h7.5V6" fill="none" stroke="#d0d0d0" stroke-width="1.1"/><path d="M3.5 5.5l4.5-4.5M5 0.8h3.2V4" fill="none" stroke="#d0d0d0" stroke-width="1.1"/></svg>
<svg class="a" style="left:774px;top:212.5px;" width="9" height="9" viewBox="0 0 9 9"><rect x="0.5" y="0.5" width="5.5" height="5.5" fill="none" stroke="#d0d0d0" stroke-width="0.9"/><rect x="3" y="3" width="5.5" height="5.5" fill="#323232" stroke="#d0d0d0" stroke-width="0.9"/></svg>
<div class="a" style="left:809px;top:22px;width:91px;height:13px;background:#262626;"></div>
<div class="a" style="left:788px;top:22px;width:21px;height:13px;background:#323232;"></div>
<svg class="a" style="left:793.0px;top:26px;opacity:1.0" width="5.8" height="5.8" viewBox="0 0 6 6"><path d="M0.3 1.5h5.4M3 0.3v5.4M1 3.5l-0.7 2M5 3.5l0.7 2M1.5 4h3" fill="none" stroke="#dedede" stroke-width="0.88"/></svg><svg class="a" style="left:799.1px;top:26px;opacity:1.0" width="5.8" height="5.8" viewBox="0 0 6 6"><path d="M0.5 1h5M1.5 1v4.5M4.5 1v4.5M1.5 3.2h3M0.3 5.5h5.4" fill="none" stroke="#dedede" stroke-width="0.88"/></svg>
<svg class="a" style="left:793.0px;top:41.2px;opacity:1.0" width="4.8" height="4.8" viewBox="0 0 6 6"><path d="M0.3 1.5h5.4M3 0.3v5.4M1 3.5l-0.7 2M5 3.5l0.7 2M1.5 4h3" fill="none" stroke="#a2a2a2" stroke-width="1.06"/></svg><svg class="a" style="left:798.2px;top:41.2px;opacity:1.0" width="4.8" height="4.8" viewBox="0 0 6 6"><path d="M0.5 1h5M1.5 1v4.5M4.5 1v4.5M1.5 3.2h3M0.3 5.5h5.4" fill="none" stroke="#a2a2a2" stroke-width="1.06"/></svg>
<div class="a" style="left:788px;top:50px;width:112px;height:1px;background:#262626;"></div>
<svg class="a" style="left:793.0px;top:56.2px;opacity:1.0" width="4.8" height="4.8" viewBox="0 0 6 6"><path d="M0.3 1.5h5.4M3 0.3v5.4M1 3.5l-0.7 2M5 3.5l0.7 2M1.5 4h3" fill="none" stroke="#a2a2a2" stroke-width="1.06"/></svg><svg class="a" style="left:798.2px;top:56.2px;opacity:1.0" width="4.8" height="4.8" viewBox="0 0 6 6"><path d="M0.5 1h5M1.5 1v4.5M4.5 1v4.5M1.5 3.2h3M0.3 5.5h5.4" fill="none" stroke="#a2a2a2" stroke-width="1.06"/></svg>
<svg class="a" style="left:793px;top:72px;" width="10" height="10" viewBox="0 0 10 10"><rect x="0.8" y="0.8" width="8.4" height="8.4" rx="1.5" fill="none" stroke="#9a9a9a" stroke-width="0.9" stroke-dasharray="1.1 0.7"/><path d="M5 0.8v8.4M0.8 5h8.4" stroke="#666" stroke-width="0.5"/><circle cx="5" cy="5" r="1.3" fill="#f0f0f0"/></svg>
<div class="a t" style="left:809px;top:68.35px;font-size:5px;line-height:5px;color:#a2a2a2;transform:scaleX(0.750);transform-origin:0 0;font-family:'Liberation Mono',monospace;">X:</div>
<div class="a" style="left:815px;top:65.5px;width:27px;height:10px;background:#383838;border-radius:2px"></div>
<div class="a" style="left:816px;top:66.5px;width:25.5px;height:8px;background:#262626;border-radius:1px"></div>
<div class="a t" style="left:817.8px;top:69.14px;font-size:6.6px;line-height:6.6px;color:#dcdcdc;transform:scaleX(0.716);transform-origin:0 0;font-family:'Liberation Mono',monospace;">-104.422</div>
<div class="a t" style="left:809px;top:80.35px;font-size:5px;line-height:5px;color:#a2a2a2;transform:scaleX(0.750);transform-origin:0 0;font-family:'Liberation Mono',monospace;">Y:</div>
<div class="a" style="left:815px;top:77.8px;width:27px;height:10px;background:#383838;border-radius:2px"></div>
<div class="a" style="left:816px;top:78.6px;width:25.5px;height:8px;background:#262626;border-radius:1px"></div>
<div class="a t" style="left:817.8px;top:81.14px;font-size:6.6px;line-height:6.6px;color:#dcdcdc;transform:scaleX(0.710);transform-origin:0 0;font-family:'Liberation Mono',monospace;">31.75 mm</div>
<svg class="a" style="left:849.5px;top:68.2px;opacity:1.0" width="5" height="5" viewBox="0 0 6 6"><path d="M0.5 1h5M1.5 1v4.5M4.5 1v4.5M1.5 3.2h3M0.3 5.5h5.4" fill="none" stroke="#a2a2a2" stroke-width="1.02"/></svg>
<div class="a t" style="left:856px;top:69.35px;font-size:5px;line-height:5px;color:#a2a2a2;">:</div>
<div class="a" style="left:858.5px;top:65.5px;width:27px;height:10px;background:#383838;border-radius:2px"></div>
<div class="a" style="left:859.4px;top:66.2px;width:26px;height:8.3px;background:#262626;border-radius:1px"></div>
<div class="a t" style="left:861.5px;top:69.14px;font-size:6.6px;line-height:6.6px;color:#dcdcdc;transform:scaleX(0.713);transform-origin:0 0;font-family:'Liberation Mono',monospace;">19.756 m</div>
<svg class="a" style="left:849.5px;top:80.2px;opacity:1.0" width="5" height="5" viewBox="0 0 6 6"><path d="M0.5 1h5M1.5 1v4.5M4.5 1v4.5M1.5 3.2h3M0.3 5.5h5.4" fill="none" stroke="#a2a2a2" stroke-width="1.02"/></svg>
<div class="a t" style="left:856px;top:81.35px;font-size:5px;line-height:5px;color:#a2a2a2;">:</div>
<div class="a" style="left:858.5px;top:77.8px;width:27px;height:10px;background:#383838;border-radius:2px"></div>
<div class="a" style="left:859.4px;top:78.3px;width:26px;height:8.5px;background:#262626;border-radius:1px"></div>
<div class="a t" style="left:861.5px;top:81.14px;font-size:6.6px;line-height:6.6px;color:#dcdcdc;transform:scaleX(0.713);transform-origin:0 0;font-family:'Liberation Mono',monospace;">19.756 m</div>
<svg class="a" style="left:890px;top:72px;" width="9" height="10" viewBox="0 0 9 10"><path d="M2.5 1.2a1.6 1.6 0 0 1 3.2 0v2.6M3.2 6.2v1.8a1.6 1.6 0 0 0 3.2 0V6" fill="none" stroke="#c8c8c8" stroke-width="1.1"/><path d="M0.8 0.8l7.4 8.4" stroke="#c8c8c8" stroke-width="1"/></svg>
<svg class="a" style="left:806px;top:90px;" width="7" height="7" viewBox="0 0 7 7"><path d="M0.5 6.5h6M0.5 6.5L5 1" fill="none" stroke="#bdbdbd" stroke-width="1"/><path d="M3 3.5a3 3 0 0 1 1 3" fill="none" stroke="#bdbdbd" stroke-width="0.8"/></svg>
<div class="a" style="left:816px;top:91px;width:17px;height:8px;background:#262626;border-radius:1px"></div>
<div class="a t" style="left:817.5px;top:93.64px;font-size:6.6px;line-height:6.6px;color:#dcdcdc;transform:scaleX(0.757);transform-origin:0 0;font-family:'Liberation Mono',monospace;">0°</div>
<div class="a" style="left:834px;top:91px;width:8px;height:8px;background:#262626;border-radius:1px"></div>
<svg class="a" style="left:835px;top:93.5px;" width="6" height="5.5" viewBox="0 0 6 5.5"><polyline points="1,1 3.0,3.5 5,1" fill="none" stroke="#d0d0d0" stroke-width="1.2" stroke-linejoin="round" stroke-linecap="round"/></svg>
<svg class="a" style="left:858.5px;top:92.5px;" width="8" height="6" viewBox="0 0 8 6"><path d="M0.5 0.5l3 2.5-3 2.5z" fill="none" stroke="#cfcfcf" stroke-width="0.8"/><path d="M7.5 0.5l-3 2.5 3 2.5z" fill="#cfcfcf"/></svg>
<svg class="a" style="left:873.5px;top:91px;" width="6" height="9" viewBox="0 0 6 9"><path d="M0.5 0.5h5l-2.5 3z" fill="none" stroke="#cfcfcf" stroke-width="0.8"/><path d="M0.5 8.5h5l-2.5-3z" fill="#cfcfcf"/></svg>
<svg class="a" style="left:893.5px;top:104px;" width="8" height="3" viewBox="0 0 8 3"><circle cx="1.0" cy="1.5" r="0.9" fill="#bbb"/><circle cx="3.6" cy="1.5" r="0.9" fill="#bbb"/><circle cx="6.2" cy="1.5" r="0.9" fill="#bbb"/></svg>
<div class="a" style="left:788px;top:111px;width:112px;height:1px;background:#262626;"></div>
<svg class="a" style="left:793.0px;top:117.5px;opacity:1.0" width="4.8" height="4.8" viewBox="0 0 6 6"><path d="M0.3 1.5h5.4M3 0.3v5.4M1 3.5l-0.7 2M5 3.5l0.7 2M1.5 4h3" fill="none" stroke="#a2a2a2" stroke-width="1.06"/></svg><svg class="a" style="left:798.2px;top:117.5px;opacity:1.0" width="4.8" height="4.8" viewBox="0 0 6 6"><path d="M0.5 1h5M1.5 1v4.5M4.5 1v4.5M1.5 3.2h3M0.3 5.5h5.4" fill="none" stroke="#a2a2a2" stroke-width="1.06"/></svg>
<div class="a" style="left:793px;top:128px;width:9px;height:9px;background:#1e1e1e;border-radius:1px"></div>
<div class="a" style="left:794px;top:129px;width:7px;height:7px;background:#ef4a22;"></div>
<svg class="a" style="left:807.4px;top:129.8px;opacity:1.0" width="4.8" height="4.8" viewBox="0 0 6 6"><path d="M0.5 1h5M1.5 1v4.5M4.5 1v4.5M1.5 3.2h3M0.3 5.5h5.4" fill="none" stroke="#a2a2a2" stroke-width="1.06"/></svg><svg class="a" style="left:812.5px;top:129.8px;opacity:1.0" width="4.8" height="4.8" viewBox="0 0 6 6"><path d="M0.5 0.8h2v4.5M3.5 0.8h2v4.7M0.5 3h5M2.5 5.5h3" fill="none" stroke="#a2a2a2" stroke-width="1.06"/></svg>
<div class="a" style="left:793px;top:141px;width:9px;height:9px;background:#1e1e1e;border-radius:1px"></div>
<div class="a" style="left:794px;top:142px;width:7px;height:7px;background:#ffffff;"></div>
<div class="a" style="left:795.5px;top:143.5px;width:4px;height:4px;background:#1a1a1a;"></div>
<svg class="a" style="left:794px;top:142px;" width="7" height="7" viewBox="0 0 7 7"><line x1="0" y1="7" x2="7" y2="0" stroke="#e8391a" stroke-width="1.1"/></svg>
<svg class="a" style="left:807.4px;top:143.8px;opacity:1.0" width="4.8" height="4.8" viewBox="0 0 6 6"><path d="M0.5 1h5M1.5 1v4.5M4.5 1v4.5M1.5 3.2h3M0.3 5.5h5.4" fill="none" stroke="#a2a2a2" stroke-width="1.06"/></svg><svg class="a" style="left:812.5px;top:143.8px;opacity:1.0" width="4.8" height="4.8" viewBox="0 0 6 6"><path d="M0.5 0.8h2v4.5M3.5 0.8h2v4.7M0.5 3h5M2.5 5.5h3" fill="none" stroke="#a2a2a2" stroke-width="1.06"/></svg>
<svg class="a" style="left:832px;top:141px;" width="6" height="9" viewBox="0 0 6 9"><polyline points="1,3 3,1 5,3" fill="none" stroke="#c8c8c8" stroke-width="0.9"/><polyline points="1,6 3,8 5,6" fill="none" stroke="#c8c8c8" stroke-width="0.9"/></svg>
<div class="a" style="left:839px;top:141px;width:16px;height:9px;background:#262626;border-radius:1px"></div>
<div class="a" style="left:855px;top:141px;width:8px;height:9px;background:#262626;border-radius:1px"></div>
<svg class="a" style="left:856px;top:144px;" width="6" height="5.5" viewBox="0 0 6 5.5"><polyline points="1,1 3.0,3.5 5,1" fill="none" stroke="#d0d0d0" stroke-width="1.2" stroke-linejoin="round" stroke-linecap="round"/></svg>
<svg class="a" style="left:793px;top:155px;" width="9" height="9" viewBox="0 0 9 9"><rect x="0.5" y="0.5" width="8" height="8" fill="none" stroke="#8a8a8a" stroke-width="0.8"/><circle cx="2.8" cy="2.8" r="1" fill="none" stroke="#aaa" stroke-width="0.6"/><circle cx="2.8" cy="6.199999999999999" r="1" fill="none" stroke="#aaa" stroke-width="0.6"/><circle cx="6.199999999999999" cy="2.8" r="1" fill="none" stroke="#aaa" stroke-width="0.6"/><circle cx="6.199999999999999" cy="6.199999999999999" r="1" fill="none" stroke="#aaa" stroke-width="0.6"/></svg>
<svg class="a" style="left:807.4px;top:156.6px;opacity:1.0" width="4.8" height="4.8" viewBox="0 0 6 6"><path d="M0.5 1h5M1.5 1v4.5M4.5 1v4.5M1.5 3.2h3M0.3 5.5h5.4" fill="none" stroke="#a2a2a2" stroke-width="1.06"/></svg><svg class="a" style="left:812.3px;top:156.6px;opacity:1.0" width="4.8" height="4.8" viewBox="0 0 6 6"><path d="M0.5 0.8h2v4.5M3.5 0.8h2v4.7M0.5 3h5M2.5 5.5h3" fill="none" stroke="#a2a2a2" stroke-width="1.06"/></svg><svg class="a" style="left:817.1999999999999px;top:156.6px;opacity:1.0" width="4.8" height="4.8" viewBox="0 0 6 6"><path d="M0.3 1.5h5.4M3 0.3v5.4M1 3.5l-0.7 2M5 3.5l0.7 2M1.5 4h3" fill="none" stroke="#a2a2a2" stroke-width="1.06"/></svg><svg class="a" style="left:822.1px;top:156.6px;opacity:1.0" width="4.8" height="4.8" viewBox="0 0 6 6"><path d="M0.5 1h5M1.5 1v4.5M4.5 1v4.5M1.5 3.2h3M0.3 5.5h5.4" fill="none" stroke="#a2a2a2" stroke-width="1.06"/></svg>
<div class="a" style="left:831px;top:155px;width:24px;height:9px;background:#262626;border-radius:1px"></div>
<div class="a t" style="left:832.5px;top:157.64px;font-size:6.6px;line-height:6.6px;color:#dcdcdc;transform:scaleX(0.789);transform-origin:0 0;font-family:'Liberation Mono',monospace;">100%</div>
<div class="a" style="left:855px;top:155px;width:8px;height:9px;background:#262626;border-radius:1px"></div>
<svg class="a" style="left:857px;top:156px;" width="5" height="7" viewBox="0 0 5 7"><polyline points="1.5,1.2 3.5,3.5 1.5,5.8" fill="none" stroke="#d0d0d0" stroke-width="1"/></svg>
<div class="a t" style="left:797px;top:168.53px;font-size:7.5px;line-height:7.5px;color:#bdbdbd;transform:scaleX(1.200);transform-origin:0 0;font-style:italic;font-family:'Liberation Serif',serif;">fx</div>
<svg class="a" style="left:892px;top:183px;" width="8" height="3" viewBox="0 0 8 3"><circle cx="1.0" cy="1.5" r="0.9" fill="#bbb"/><circle cx="3.6" cy="1.5" r="0.9" fill="#bbb"/><circle cx="6.2" cy="1.5" r="0.9" fill="#bbb"/></svg>
<div class="a" style="left:788px;top:190px;width:112px;height:1px;background:#262626;"></div>
<svg class="a" style="left:793.0px;top:198.5px;opacity:1.0" width="4.6" height="4.6" viewBox="0 0 6 6"><path d="M0.3 1.5h5.4M3 0.3v5.4M1 3.5l-0.7 2M5 3.5l0.7 2M1.5 4h3" fill="none" stroke="#a2a2a2" stroke-width="1.11"/></svg><svg class="a" style="left:797.6px;top:198.5px;opacity:1.0" width="4.6" height="4.6" viewBox="0 0 6 6"><path d="M0.5 1h5M1.5 1v4.5M4.5 1v4.5M1.5 3.2h3M0.3 5.5h5.4" fill="none" stroke="#a2a2a2" stroke-width="1.11"/></svg><svg class="a" style="left:802.2px;top:198.5px;opacity:1.0" width="4.6" height="4.6" viewBox="0 0 6 6"><path d="M0.5 0.8h2v4.5M3.5 0.8h2v4.7M0.5 3h5M2.5 5.5h3" fill="none" stroke="#a2a2a2" stroke-width="1.11"/></svg><svg class="a" style="left:806.8px;top:198.5px;opacity:1.0" width="4.6" height="4.6" viewBox="0 0 6 6"><path d="M0.3 1.5h5.4M3 0.3v5.4M1 3.5l-0.7 2M5 3.5l0.7 2M1.5 4h3" fill="none" stroke="#a2a2a2" stroke-width="1.11"/></svg>
<div class="a" style="left:793px;top:207px;width:48px;height:11px;background:#323232;border:1px solid #4a4a4a;border-radius:2px;"></div>
<svg class="a" style="left:808.0px;top:210.8px;opacity:1.0" width="4.6" height="4.6" viewBox="0 0 6 6"><path d="M3 0.3v1M0.5 1.5h5M1 3h4M0.5 5.5l2-2M5.5 5.5l-2-2" fill="none" stroke="#cfcfcf" stroke-width="1.11"/></svg><svg class="a" style="left:812.6px;top:210.8px;opacity:1.0" width="4.6" height="4.6" viewBox="0 0 6 6"><path d="M0.5 1.2h5M0.5 3h5M0.5 5.2h5M1.2 1.2v4M4.8 1.2v4" fill="none" stroke="#cfcfcf" stroke-width="1.11"/></svg><svg class="a" style="left:817.2px;top:210.8px;opacity:1.0" width="4.6" height="4.6" viewBox="0 0 6 6"><path d="M0.8 0.5v5M0.8 2.5h2M3 1h2.7M4.3 1v4.5M3 3.3h2.7M2.5 5.5h3" fill="none" stroke="#cfcfcf" stroke-width="1.11"/></svg><svg class="a" style="left:821.8px;top:210.8px;opacity:1.0" width="4.6" height="4.6" viewBox="0 0 6 6"><path d="M3 0.3v1M0.5 1.5h5M1 3h4M0.5 5.5l2-2M5.5 5.5l-2-2" fill="none" stroke="#cfcfcf" stroke-width="1.11"/></svg>
<div class="a" style="left:845px;top:207px;width:48px;height:11px;background:#323232;border:1px solid #4a4a4a;border-radius:2px;"></div>
<svg class="a" style="left:860.0px;top:210.8px;opacity:1.0" width="4.6" height="4.6" viewBox="0 0 6 6"><path d="M0.8 0.5v5M0.8 2.5h2M3 1h2.7M4.3 1v4.5M3 3.3h2.7M2.5 5.5h3" fill="none" stroke="#cfcfcf" stroke-width="1.11"/></svg><svg class="a" style="left:864.6px;top:210.8px;opacity:1.0" width="4.6" height="4.6" viewBox="0 0 6 6"><path d="M3 0.3v1M0.5 1.5h5M1 3h4M0.5 5.5l2-2M5.5 5.5l-2-2" fill="none" stroke="#cfcfcf" stroke-width="1.11"/></svg><svg class="a" style="left:869.2px;top:210.8px;opacity:1.0" width="4.6" height="4.6" viewBox="0 0 6 6"><path d="M0.5 1.2h5M0.5 3h5M0.5 5.2h5M1.2 1.2v4M4.8 1.2v4" fill="none" stroke="#cfcfcf" stroke-width="1.11"/></svg><svg class="a" style="left:873.8px;top:210.8px;opacity:1.0" width="4.6" height="4.6" viewBox="0 0 6 6"><path d="M0.8 0.5v5M0.8 2.5h2M3 1h2.7M4.3 1v4.5M3 3.3h2.7M2.5 5.5h3" fill="none" stroke="#cfcfcf" stroke-width="1.11"/></svg>
<div class="a" style="left:793px;top:222px;width:100px;height:11px;background:#323232;border:1px solid #4a4a4a;border-radius:2px;"></div>
<svg class="a" style="left:838.2px;top:225.8px;opacity:1.0" width="4.7" height="4.7" viewBox="0 0 6 6"><path d="M3 0.3v1M0.5 1.5h5M1 3h4M0.5 5.5l2-2M5.5 5.5l-2-2" fill="none" stroke="#cfcfcf" stroke-width="1.09"/></svg><svg class="a" style="left:842.9000000000001px;top:225.8px;opacity:1.0" width="4.7" height="4.7" viewBox="0 0 6 6"><path d="M0.5 1.2h5M0.5 3h5M0.5 5.2h5M1.2 1.2v4M4.8 1.2v4" fill="none" stroke="#cfcfcf" stroke-width="1.09"/></svg>
<div class="a" style="left:793px;top:237px;width:100px;height:11px;background:#323232;border:1px solid #4a4a4a;border-radius:2px;"></div>
<svg class="a" style="left:833.5px;top:240.8px;opacity:1.0" width="4.8" height="4.8" viewBox="0 0 6 6"><path d="M0.5 0.8h2v4.5M3.5 0.8h2v4.7M0.5 3h5M2.5 5.5h3" fill="none" stroke="#cfcfcf" stroke-width="1.06"/></svg><svg class="a" style="left:838.3px;top:240.8px;opacity:1.0" width="4.8" height="4.8" viewBox="0 0 6 6"><path d="M0.3 1.5h5.4M3 0.3v5.4M1 3.5l-0.7 2M5 3.5l0.7 2M1.5 4h3" fill="none" stroke="#cfcfcf" stroke-width="1.06"/></svg><svg class="a" style="left:843.1px;top:240.8px;opacity:1.0" width="4.8" height="4.8" viewBox="0 0 6 6"><path d="M0.5 1h5M1.5 1v4.5M4.5 1v4.5M1.5 3.2h3M0.3 5.5h5.4" fill="none" stroke="#cfcfcf" stroke-width="1.06"/></svg><svg class="a" style="left:847.9px;top:240.8px;opacity:1.0" width="4.8" height="4.8" viewBox="0 0 6 6"><path d="M0.5 0.8h2v4.5M3.5 0.8h2v4.7M0.5 3h5M2.5 5.5h3" fill="none" stroke="#cfcfcf" stroke-width="1.06"/></svg>
<div class="a" style="left:793px;top:252px;width:90px;height:10px;background:#3a3a3a;border:1px solid #4a4a4a;border-radius:2px;background:#383838;background-image:radial-gradient(circle,#444 0.5px,transparent 0.8px);background-size:2px 2px"></div>
<svg class="a" style="left:823.8px;top:255px;opacity:1.0" width="4.85" height="4.85" viewBox="0 0 6 6"><path d="M0.3 1.5h5.4M3 0.3v5.4M1 3.5l-0.7 2M5 3.5l0.7 2M1.5 4h3" fill="none" stroke="#dadada" stroke-width="1.05"/></svg><svg class="a" style="left:828.65px;top:255px;opacity:1.0" width="4.85" height="4.85" viewBox="0 0 6 6"><path d="M0.5 1h5M1.5 1v4.5M4.5 1v4.5M1.5 3.2h3M0.3 5.5h5.4" fill="none" stroke="#dadada" stroke-width="1.05"/></svg><svg class="a" style="left:833.5px;top:255px;opacity:1.0" width="4.85" height="4.85" viewBox="0 0 6 6"><path d="M0.5 0.8h2v4.5M3.5 0.8h2v4.7M0.5 3h5M2.5 5.5h3" fill="none" stroke="#dadada" stroke-width="1.05"/></svg><svg class="a" style="left:838.3499999999999px;top:255px;opacity:1.0" width="4.85" height="4.85" viewBox="0 0 6 6"><path d="M0.3 1.5h5.4M3 0.3v5.4M1 3.5l-0.7 2M5 3.5l0.7 2M1.5 4h3" fill="none" stroke="#dadada" stroke-width="1.05"/></svg><svg class="a" style="left:843.1999999999999px;top:255px;opacity:1.0" width="4.85" height="4.85" viewBox="0 0 6 6"><path d="M0.5 1h5M1.5 1v4.5M4.5 1v4.5M1.5 3.2h3M0.3 5.5h5.4" fill="none" stroke="#dadada" stroke-width="1.05"/></svg><svg class="a" style="left:848.05px;top:255px;opacity:1.0" width="4.85" height="4.85" viewBox="0 0 6 6"><path d="M0.5 0.8h2v4.5M3.5 0.8h2v4.7M0.5 3h5M2.5 5.5h3" fill="none" stroke="#dadada" stroke-width="1.05"/></svg>
<div class="a" style="left:883px;top:252px;width:10px;height:10px;background:#222222;border-radius:1px"></div>
<svg class="a" style="left:885px;top:255px;" width="7" height="6" viewBox="0 0 7 6"><polyline points="1,1 3.5,4 6,1" fill="none" stroke="#d0d0d0" stroke-width="1.2" stroke-linejoin="round" stroke-linecap="round"/></svg>
<svg class="a" style="left:847px;top:255px;" width="9" height="12" viewBox="0 0 9 12"><path d="M1 1v9l2.2-2 1.6 3.3 1.5-.7-1.6-3.2H8z" fill="#fff" stroke="#111" stroke-width="0.8"/></svg>
<div class="a" style="left:31px;top:476px;width:729px;height:6px;background:#2e2e2e;"></div>
<div class="a" style="left:236px;top:476px;width:525px;height:6px;background:#262626;"></div>
<div class="a" style="left:33px;top:477px;width:24px;height:5px;background:#222222;"></div>
<div class="a t" style="left:34px;top:477.22px;font-size:6px;line-height:6px;color:#c8c8c8;transform:scaleX(0.782);transform-origin:0 0;">100%</div>
<svg class="a" style="left:59px;top:478px;" width="6" height="5.5" viewBox="0 0 6 5.5"><polyline points="1,1 3.0,3.5 5,1" fill="none" stroke="#d0d0d0" stroke-width="1.2" stroke-linejoin="round" stroke-linecap="round"/></svg>
<svg class="a" style="left:70px;top:477px;" width="12" height="5" viewBox="0 0 12 5"><path d="M1 0.5v4M4 0.5L2.5 2.5 4 4.5M9 0.5L7.5 2.5 9 4.5" fill="none" stroke="#666" stroke-width="0.8"/></svg>
<div class="a" style="left:86px;top:477px;width:19px;height:5px;background:#222222;"></div>
<div class="a t" style="left:87.5px;top:477.22px;font-size:6px;line-height:6px;color:#c8c8c8;transform:scaleX(0.599);transform-origin:0 0;">1</div>
<svg class="a" style="left:107px;top:478px;" width="6" height="5.5" viewBox="0 0 6 5.5"><polyline points="1,1 3.0,3.5 5,1" fill="none" stroke="#d0d0d0" stroke-width="1.2" stroke-linejoin="round" stroke-linecap="round"/></svg>
<svg class="a" style="left:117px;top:477px;" width="12" height="5" viewBox="0 0 12 5"><path d="M2 0.5L3.5 2.5 2 4.5M8 0.5L9.5 2.5 8 4.5M11 0.5v4" fill="none" stroke="#666" stroke-width="0.8"/></svg>
<svg class="a" style="left:175px;top:478px;opacity:1.0" width="4" height="4" viewBox="0 0 6 6"><path d="M0.3 1.5h5.4M3 0.3v5.4M1 3.5l-0.7 2M5 3.5l0.7 2M1.5 4h3" fill="none" stroke="#9a9a9a" stroke-width="1.28"/></svg><svg class="a" style="left:180px;top:478px;opacity:1.0" width="4" height="4" viewBox="0 0 6 6"><path d="M0.5 1h5M1.5 1v4.5M4.5 1v4.5M1.5 3.2h3M0.3 5.5h5.4" fill="none" stroke="#9a9a9a" stroke-width="1.28"/></svg>
<svg class="a" style="left:230px;top:477px;" width="5" height="5" viewBox="0 0 5 5"><path d="M1 0.5l3 2-3 2z" fill="#d0d0d0"/></svg>
<svg class="a" style="left:238px;top:477px;" width="5" height="5" viewBox="0 0 5 5"><path d="M3.5 0.5L1.5 2.5 3.5 4.5" fill="none" stroke="#aaa" stroke-width="0.9"/></svg>
<svg class="a" style="left:755px;top:477px;" width="5" height="5" viewBox="0 0 5 5"><path d="M1.5 0.5L3.5 2.5 1.5 4.5" fill="none" stroke="#aaa" stroke-width="0.9"/></svg>
<svg class="a" style="left:183px;top:73px;" width="36" height="36" viewBox="0 0 36 36"><rect x="4.25" y="4.5" width="26.65" height="26.5" fill="none" stroke="#5a8ae0" stroke-width="0.6" opacity="0.4"/><circle cx="4.25" cy="4.5" r="1.7" fill="#ffffff" stroke="#6a9ae0" stroke-width="0.7"/><circle cx="4.25" cy="17.75" r="1.7" fill="#ffffff" stroke="#6a9ae0" stroke-width="0.7"/><circle cx="4.25" cy="31" r="1.7" fill="#ffffff" stroke="#6a9ae0" stroke-width="0.7"/><circle cx="17.6" cy="4.5" r="1.7" fill="#ffffff" stroke="#6a9ae0" stroke-width="0.7"/><circle cx="17.6" cy="31" r="1.7" fill="#ffffff" stroke="#6a9ae0" stroke-width="0.7"/><circle cx="30.9" cy="4.5" r="1.7" fill="#ffffff" stroke="#6a9ae0" stroke-width="0.7"/><circle cx="30.9" cy="17.75" r="1.7" fill="#ffffff" stroke="#6a9ae0" stroke-width="0.7"/><circle cx="30.9" cy="31" r="1.7" fill="#ffffff" stroke="#6a9ae0" stroke-width="0.7"/><circle cx="10.5" cy="11.5" r="1.6" fill="#a6cbf5" stroke="#5b8fd8" stroke-width="0.7"/><circle cx="10.5" cy="24.7" r="1.6" fill="#a6cbf5" stroke="#5b8fd8" stroke-width="0.7"/><circle cx="24" cy="11.5" r="1.6" fill="#a6cbf5" stroke="#5b8fd8" stroke-width="0.7"/><circle cx="24" cy="24.7" r="1.6" fill="#a6cbf5" stroke="#5b8fd8" stroke-width="0.7"/><circle cx="17.3" cy="18" r="1.2" fill="#4f86d8"/></svg>
<div class="a" style="left:487px;top:477px;width:13px;height:6px;background:#3a3a3a;border-radius:3px;box-shadow:inset 0 0 0 1px #454545"></div>
</body></html>
